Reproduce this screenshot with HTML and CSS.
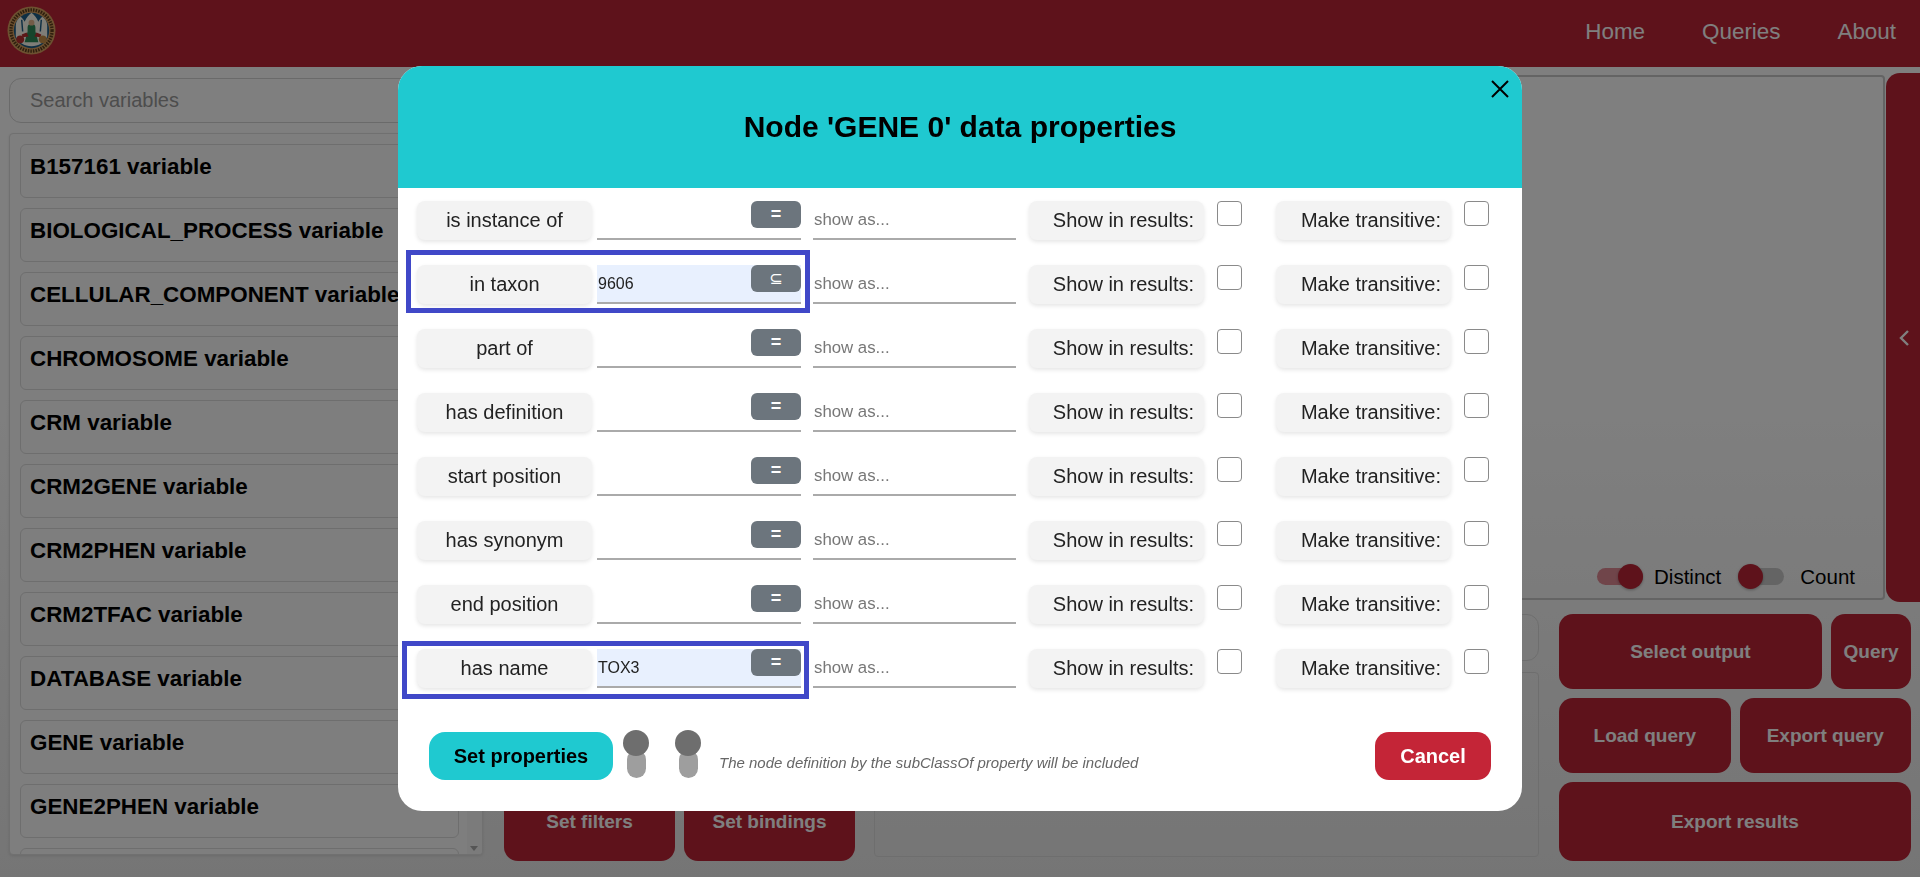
FILE: index.html
```html
<!DOCTYPE html>
<html lang="en">
<head>
    <meta charset="UTF-8">
    <meta name="viewport" content="width=device-width, initial-scale=1.0">
    <title>Query builder</title>
    <link rel="stylesheet" href="styles.css">
</head>
<body>

    <!-- Navbar -->
    <div class="navbar">
        <svg class="logo" viewBox="0 0 50 50" aria-label="Logo">
            <circle cx="25" cy="25" r="24.5" fill="#d8a060"/>
            <circle cx="25" cy="25" r="21" fill="none" stroke="#5c3f1c" stroke-width="3.4" stroke-dasharray="1.6 1.1"/>
            <circle cx="25" cy="25" r="18" fill="#1f5f88"/>
            <path d="M9 31V20c0-4 2-7 5-9 2 2 3 3 4 5 2-4 4-7 7-9 3 2 5 5 7 9 1-2 2-3 4-5 3 2 5 5 5 9v11c-2 6-9 10-16 10S11 37 9 31z" fill="#fffdf0"/>
            <path d="M21 22a4 4 0 0 1 8 0v4l3 11H18l3-11z" fill="#2f8a58"/>
            <circle cx="25" cy="17" r="3" fill="#e8b890"/>
            <path d="M20 27l-5 2 1 3 6-1zM30 27l5 2-1 3-6-1z" fill="#b83030"/>
            <circle cx="13.500" cy="34" r="4" fill="#b83030"/>
            <circle cx="36.500" cy="34" r="4" fill="#c89048"/>
            <path d="M15 14l1 12M35 14l-1 12" stroke="#1f5f88" stroke-width="1.500"/>
        </svg>
        <div class="nav-links">
            <a href="#">Home</a>
            <a href="#">Queries</a>
            <a href="#">About</a>
        </div>
    </div>

    <div class="main">
        <div class="left-col">
            <input class="search" type="text" placeholder="Search variables">
            <div class="var-box">
                <div class="var-list">
                    <div class="var-item"><b>B157161 variable</b></div>
                    <div class="var-item"><b>BIOLOGICAL_PROCESS variable</b></div>
                    <div class="var-item"><b>CELLULAR_COMPONENT variable</b></div>
                    <div class="var-item"><b>CHROMOSOME variable</b></div>
                    <div class="var-item"><b>CRM variable</b></div>
                    <div class="var-item"><b>CRM2GENE variable</b></div>
                    <div class="var-item"><b>CRM2PHEN variable</b></div>
                    <div class="var-item"><b>CRM2TFAC variable</b></div>
                    <div class="var-item"><b>DATABASE variable</b></div>
                    <div class="var-item"><b>GENE variable</b></div>
                    <div class="var-item"><b>GENE2PHEN variable</b></div>
                    <div class="var-item"></div>
                </div>
                <div class="fake-scroll"><span class="scroll-arrow"></span></div>
            </div>
        </div>

        <div class="right-col">
            <div class="top-row">
                <div class="canvas">
                    <div class="switches">
                        <span class="switch on"><i></i></span>
                        <span class="switch-text">Distinct</span>
                        <span class="switch"><i></i></span>
                        <span class="switch-text count">Count</span>
                    </div>
                </div>
                <div class="side-tab">
                    <svg viewBox="0 0 16 16" width="16" height="16"><path d="M13 1L6 8l7 7" fill="none" stroke="#fff" stroke-width="2.400"/></svg>
                </div>
            </div>

            <div class="bottom-row">
                <div class="small-btns">
                    <button class="red-btn">Set filters</button>
                    <button class="red-btn">Set bindings</button>
                </div>
                <div class="mid-col">
                    <div class="mid-input"></div>
                    <div class="mid-box"></div>
                </div>
                <div class="action-btns">
                    <div class="btn-row h75">
                        <button class="red-btn grow">Select output</button>
                        <button class="red-btn query">Query</button>
                    </div>
                    <div class="btn-row h75">
                        <button class="red-btn half">Load query</button>
                        <button class="red-btn half">Export query</button>
                    </div>
                    <div class="btn-row h79">
                        <button class="red-btn grow">Export results</button>
                    </div>
                </div>
            </div>
        </div>
    </div>

    <!-- Properties dialog -->
    <div class="backdrop">
        <div class="modal">
            <div class="modal-header">
                <h2>Node 'GENE 0' data properties</h2>
                <svg class="close" viewBox="0 0 18 18" width="18" height="18"><path d="M1 1l16 16M17 1L1 17" stroke="#000" stroke-width="2"/></svg>
            </div>

            <div class="modal-body">
                <div class="prop-row">
                    <div class="prop-label">is instance of</div>
                    <div class="value-wrap"><input class="line-input" type="text"><button class="op-btn">=</button></div>
                    <input class="line-input show-as" type="text" placeholder="show as...">
                    <div class="check-label first">Show in results:</div>
                    <input class="check" type="checkbox">
                    <div class="check-label second">Make transitive:</div>
                    <input class="check" type="checkbox">
                </div>
                <div class="prop-row">
                    <div class="mark mark-taxon"></div>
                    <div class="prop-label">in taxon</div>
                    <div class="value-wrap"><input class="line-input filled" type="text" value="9606"><button class="op-btn subset">⊆</button></div>
                    <input class="line-input show-as" type="text" placeholder="show as...">
                    <div class="check-label first">Show in results:</div>
                    <input class="check" type="checkbox">
                    <div class="check-label second">Make transitive:</div>
                    <input class="check" type="checkbox">
                </div>
                <div class="prop-row">
                    <div class="prop-label">part of</div>
                    <div class="value-wrap"><input class="line-input" type="text"><button class="op-btn">=</button></div>
                    <input class="line-input show-as" type="text" placeholder="show as...">
                    <div class="check-label first">Show in results:</div>
                    <input class="check" type="checkbox">
                    <div class="check-label second">Make transitive:</div>
                    <input class="check" type="checkbox">
                </div>
                <div class="prop-row">
                    <div class="prop-label">has definition</div>
                    <div class="value-wrap"><input class="line-input" type="text"><button class="op-btn">=</button></div>
                    <input class="line-input show-as" type="text" placeholder="show as...">
                    <div class="check-label first">Show in results:</div>
                    <input class="check" type="checkbox">
                    <div class="check-label second">Make transitive:</div>
                    <input class="check" type="checkbox">
                </div>
                <div class="prop-row">
                    <div class="prop-label">start position</div>
                    <div class="value-wrap"><input class="line-input" type="text"><button class="op-btn">=</button></div>
                    <input class="line-input show-as" type="text" placeholder="show as...">
                    <div class="check-label first">Show in results:</div>
                    <input class="check" type="checkbox">
                    <div class="check-label second">Make transitive:</div>
                    <input class="check" type="checkbox">
                </div>
                <div class="prop-row">
                    <div class="prop-label">has synonym</div>
                    <div class="value-wrap"><input class="line-input" type="text"><button class="op-btn">=</button></div>
                    <input class="line-input show-as" type="text" placeholder="show as...">
                    <div class="check-label first">Show in results:</div>
                    <input class="check" type="checkbox">
                    <div class="check-label second">Make transitive:</div>
                    <input class="check" type="checkbox">
                </div>
                <div class="prop-row">
                    <div class="prop-label">end position</div>
                    <div class="value-wrap"><input class="line-input" type="text"><button class="op-btn">=</button></div>
                    <input class="line-input show-as" type="text" placeholder="show as...">
                    <div class="check-label first">Show in results:</div>
                    <input class="check" type="checkbox">
                    <div class="check-label second">Make transitive:</div>
                    <input class="check" type="checkbox">
                </div>
                <div class="prop-row">
                    <div class="mark mark-name"></div>
                    <div class="prop-label">has name</div>
                    <div class="value-wrap"><input class="line-input filled" type="text" value="TOX3"><button class="op-btn">=</button></div>
                    <input class="line-input show-as" type="text" placeholder="show as...">
                    <div class="check-label first">Show in results:</div>
                    <input class="check" type="checkbox">
                    <div class="check-label second">Make transitive:</div>
                    <input class="check" type="checkbox">
                </div>
            </div>

            <div class="modal-footer">
                <button class="set-btn">Set properties</button>
                <div class="v-toggle first-toggle"><span class="knob"></span><span class="track"></span></div>
                <div class="v-toggle"><span class="knob"></span><span class="track"></span></div>
                <span class="note">The node definition by the subClassOf property will be included</span>
                <button class="cancel-btn">Cancel</button>
            </div>
        </div>
    </div>

</body>
</html>
```

FILE: styles.css
```css
* {
    box-sizing: border-box;
}

body {
    font-family: "Liberation Sans", Arial, sans-serif;
    background: linear-gradient(#fff 45%, #ebebeb);
    height: 877px;
    margin: 0;
    overflow: hidden;
    color: #000;
}

/* Navbar */
.navbar {
    height: 67px;
    background-color: #bc2436;
    display: flex;
    justify-content: space-between;
    align-items: center;
    padding: 0 24px 4px 7px;
}

.logo {
    width: 49px;
    height: 49px;
    margin-top: -3px;
}

.nav-links {
    display: flex;
    gap: 57px;
}

.nav-links a {
    color: #fff;
    font-size: 22.4px;
    text-decoration: none;
}

/* Page columns */
.main {
    display: flex;
    padding-top: 6px;
}

.left-col {
    width: 474px;
    margin-left: 9px;
    padding-top: 5px;
}

.search {
    display: block;
    width: 100%;
    height: 45px;
    padding: 0 20px;
    margin-bottom: 10px;
    border: 1px solid #d4d4d4;
    border-radius: 12px;
    background: transparent;
    font-family: inherit;
    font-size: 20px;
}

.search::placeholder {
    color: #9a9a9a;
}

.var-box {
    display: flex;
    height: 722px;
    border: 1px solid #e0e0e0;
    border-radius: 4px;
    overflow: hidden;
    background: #fcfcfc;
    box-shadow: 0 1px 3px rgba(0, 0, 0, 0.1);
}

.var-list {
    flex-grow: 1;
    padding: 10px 8px 0 10px;
    overflow: hidden;
}

.var-item {
    height: 54px;
    margin-bottom: 10px;
    padding: 9px 9px 0;
    border: 1px solid #ddd;
    border-radius: 6px;
    font-size: 22.4px;
    line-height: 26px;
    white-space: nowrap;
}

.fake-scroll {
    position: relative;
    width: 15px;
    flex-shrink: 0;
    background: #f6f6f6;
}

.scroll-arrow {
    position: absolute;
    left: 3px;
    bottom: 3px;
    border-left: 4px solid transparent;
    border-right: 4px solid transparent;
    border-top: 5px solid #aaa;
}

.right-col {
    flex-grow: 1;
    margin-left: 20px;
}

.top-row {
    display: flex;
    height: 529px;
}

.canvas {
    flex-grow: 1;
    height: 525px;
    margin-top: 2px;
    border: 2px solid #c8c8c8;
    border-radius: 4px;
    display: flex;
    justify-content: flex-end;
    align-items: flex-end;
    padding: 0 28px 9px 0;
}

.switches {
    display: flex;
    align-items: center;
    height: 25px;
    font-size: 20.5px;
}

.switch {
    position: relative;
    display: block;
    width: 46px;
    height: 17px;
    border-radius: 9px;
    background: #c9c9c9;
}

.switch i {
    position: absolute;
    top: -4px;
    left: 0;
    width: 25px;
    height: 25px;
    border-radius: 50%;
    background: #bc2436;
    box-shadow: 0 1px 3px rgba(0, 0, 0, 0.3);
}

.switch.on {
    background: #e08a95;
}

.switch.on i {
    left: 21px;
}

.switch-text {
    margin: 0 17px 0 11px;
    color: #000;
}

.switch-text.count {
    margin: 0 0 0 16px;
}

.side-tab {
    width: 34px;
    margin-left: 1px;
    background: #bc2436;
    border-radius: 14px 0 0 14px;
    display: flex;
    align-items: center;
    justify-content: center;
}

.bottom-row {
    display: flex;
    margin-top: 12px;
    height: 247px;
}

.small-btns {
    display: flex;
    align-items: flex-end;
    gap: 9px;
    width: 352px;
    margin-left: 1px;
}

.small-btns .red-btn {
    width: 171px;
    height: 79px;
}

.mid-col {
    width: 665px;
    margin-left: 18px;
}

.mid-input {
    height: 47px;
    border: 1px solid #ddd;
    border-radius: 12px;
}

.mid-box {
    height: 185px;
    margin-top: 11px;
    border: 1px solid #ddd;
    border-radius: 4px;
}

.action-btns {
    width: 352px;
    margin-left: 20px;
    display: flex;
    flex-direction: column;
    gap: 9px;
}

.btn-row {
    display: flex;
    gap: 9px;
}

.h75 {
    height: 75px;
}

.h79 {
    height: 79px;
}

.red-btn {
    border: none;
    border-radius: 14px;
    background: #bc2436;
    color: #fff;
    font-family: inherit;
    font-size: 19px;
    font-weight: bold;
    padding: 0;
}

.grow {
    flex-grow: 1;
}

.query {
    width: 80px;
}

.half {
    flex: 1;
}

/* Dialog */
.backdrop {
    position: fixed;
    top: 0;
    left: 0;
    width: 100%;
    height: 100%;
    background: rgba(0, 0, 0, 0.5);
    display: flex;
    justify-content: center;
    padding-top: 66px;
}

.modal {
    width: 1124px;
    height: 745px;
    background: #fff;
    border-radius: 24px;
    overflow: hidden;
}

.modal-header {
    position: relative;
    height: 122px;
    background: #1fc9d0;
    display: flex;
    justify-content: center;
    align-items: center;
}

.modal-header h2 {
    margin: 0;
    font-size: 30px;
    font-weight: bold;
}

.close {
    position: absolute;
    top: 14px;
    right: 13px;
}

.modal-body {
    padding: 13px 0 0 19px;
}

.prop-row {
    position: relative;
    display: flex;
    align-items: flex-start;
    height: 39px;
    margin-bottom: 25px;
}

.prop-label {
    width: 175px;
    height: 39px;
    line-height: 39px;
    text-align: center;
    font-size: 20px;
    color: #222;
    background: #f3f3f3;
    border-radius: 8px;
    box-shadow: 0 2px 4px rgba(0, 0, 0, 0.1);
}

.value-wrap {
    position: relative;
    width: 204px;
    margin-left: 5px;
}

.line-input {
    display: block;
    width: 100%;
    height: 39px;
    padding: 0 0 0 1px;
    border: none;
    border-bottom: 2px solid #aaa;
    outline: none;
    background: transparent;
    font-family: inherit;
    font-size: 16px;
    color: #222;
}

.line-input.filled {
    background: #e8f0fe;
}

.line-input::placeholder {
    color: #777;
}

.show-as {
    width: 203px;
    margin-left: 12px;
    font-size: 16.8px;
}

.op-btn {
    position: absolute;
    top: 0;
    right: 0;
    width: 50px;
    height: 27px;
    border: none;
    border-radius: 6px;
    background: #6c757d;
    color: #fff;
    font-family: inherit;
    font-size: 18px;
    font-weight: bold;
    line-height: 27px;
    padding: 0;
}

.op-btn.subset {
    font-family: "DejaVu Sans", sans-serif;
    font-size: 16px;
    font-weight: normal;
}

.check-label {
    width: 175px;
    height: 39px;
    line-height: 39px;
    padding-right: 10px;
    text-align: right;
    font-size: 20px;
    color: #222;
    background: #f3f3f3;
    border-radius: 8px;
    box-shadow: 0 2px 4px rgba(0, 0, 0, 0.1);
}

.check-label.first {
    margin-left: 13px;
}

.check-label.second {
    margin-left: 34px;
}

.check {
    appearance: none;
    width: 25px;
    height: 25px;
    margin: 0 0 0 13px;
    border: 1px solid #8a8a8a;
    border-radius: 4px;
    background: #fff;
}

/* blue rectangles drawn over the two filled rows */
.mark {
    position: absolute;
    border: 5px solid #4048c8;
    pointer-events: none;
}

.mark-taxon {
    top: -15px;
    left: -11px;
    width: 404px;
    height: 63px;
}

.mark-name {
    top: -8px;
    left: -15px;
    width: 407px;
    height: 58px;
}

.modal-footer {
    display: flex;
    align-items: flex-start;
    padding: 0 31px;
    margin-top: 42px;
}

.set-btn,
.cancel-btn {
    height: 48px;
    margin-top: 2px;
    border: none;
    font-family: inherit;
    font-size: 20px;
    font-weight: bold;
    padding: 0;
}

.set-btn {
    width: 184px;
    border-radius: 16px;
    background: #1fc9d0;
    color: #000;
}

.cancel-btn {
    width: 116px;
    margin-left: auto;
    border-radius: 14px;
    background: #c42537;
    color: #fff;
}

.v-toggle {
    width: 26px;
    margin-left: 26px;
    display: flex;
    flex-direction: column;
    align-items: center;
}

.v-toggle.first-toggle {
    margin-left: 10px;
}

.knob {
    position: relative;
    width: 26px;
    height: 26px;
    border-radius: 50%;
    background: #6e6e6e;
}

.track {
    width: 19px;
    height: 28px;
    margin-top: -6px;
    border-radius: 10px;
    background: #9e9e9e;
}

.note {
    margin: 24px 0 0 18px;
    font-size: 15px;
    font-style: italic;
    line-height: 18px;
    color: #666;
}
```
